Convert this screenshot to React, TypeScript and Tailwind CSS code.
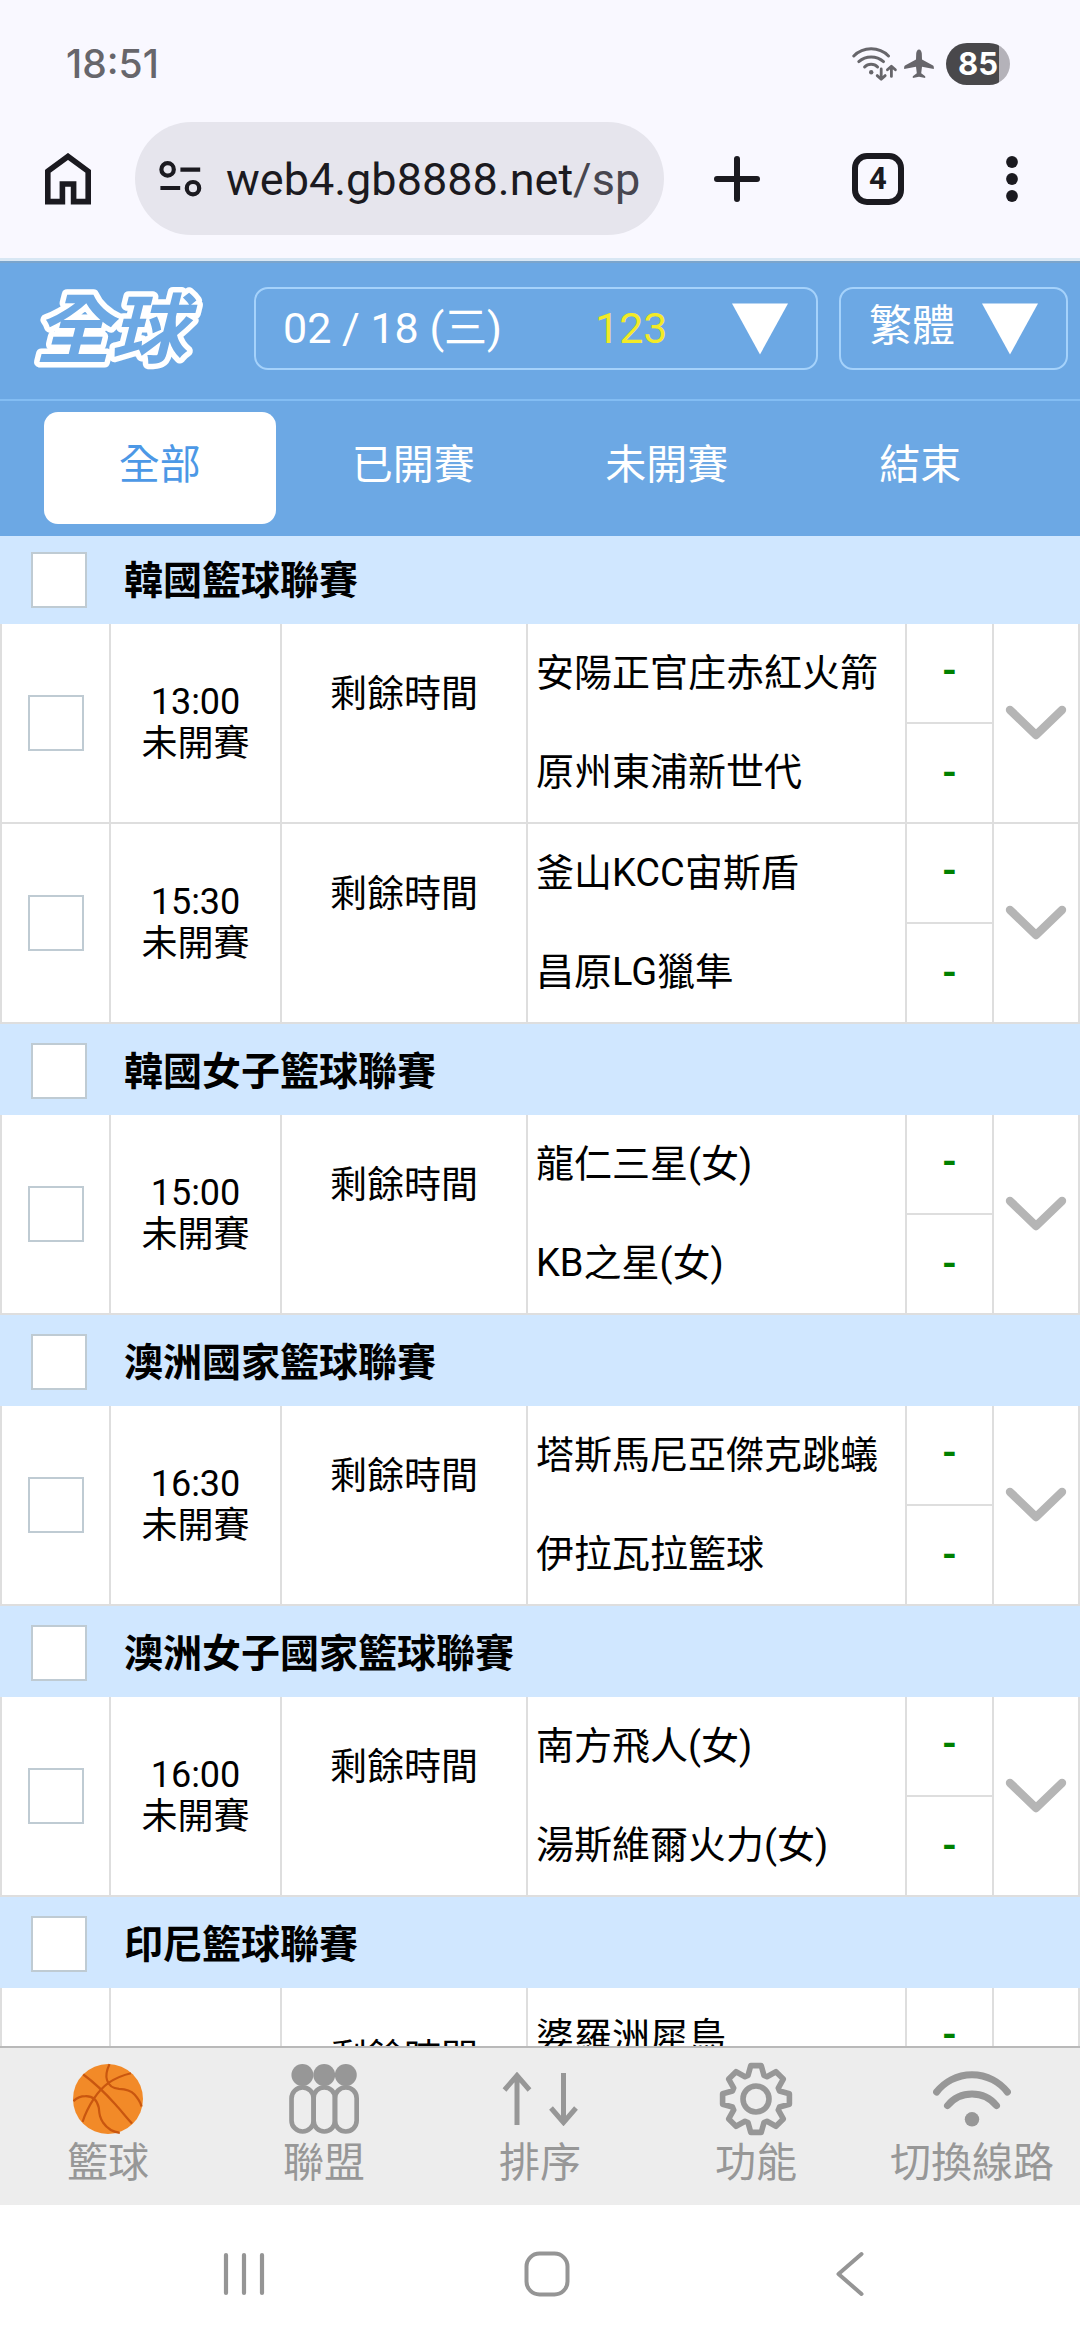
import React from "react";

type Match = {
  time: string;
  status: string;
  home: string;
  away: string;
};

type League = {
  name: string;
  matches: Match[];
};

const leagues: League[] = [
  {
    name: "韓國籃球聯賽",
    matches: [
      { time: "13:00", status: "未開賽", home: "安陽正官庄赤紅火箭", away: "原州東浦新世代" },
      { time: "15:30", status: "未開賽", home: "釜山KCC宙斯盾", away: "昌原LG獵隼" },
    ],
  },
  {
    name: "韓國女子籃球聯賽",
    matches: [{ time: "15:00", status: "未開賽", home: "龍仁三星(女)", away: "KB之星(女)" }],
  },
  {
    name: "澳洲國家籃球聯賽",
    matches: [{ time: "16:30", status: "未開賽", home: "塔斯馬尼亞傑克跳蟻", away: "伊拉瓦拉籃球" }],
  },
  {
    name: "澳洲女子國家籃球聯賽",
    matches: [{ time: "16:00", status: "未開賽", home: "南方飛人(女)", away: "湯斯維爾火力(女)" }],
  },
  {
    name: "印尼籃球聯賽",
    matches: [{ time: "", status: "", home: "婆羅洲犀鳥", away: "" }],
  },
];

function StatusBar() {
  return (
    <div className="flex h-[122px] items-start justify-between bg-[#f9f8ff] pt-[43px] pr-[70px] pl-[66px] font-['Inter',sans-serif]">
      <span className="text-[39px] leading-[42px] font-medium text-[#67666b]">18:51</span>
      <div className="flex h-[42px] items-center">
        <svg width="46" height="36" viewBox="0 0 46 36" fill="none" stroke="#67666b" strokeWidth="3" strokeLinecap="round" strokeLinejoin="round" aria-hidden="true">
          <path d="M1.8 10A24.6 24.6 0 0 1 36.5 10" />
          <path d="M6.8 15.6A18.6 18.6 0 0 1 31.5 15.6" />
          <path d="M12.6 21A9 9 0 0 1 25.6 21" />
          <circle cx="19.2" cy="26.3" r="2.2" fill="#67666b" stroke="none" />
          <path d="M29.2 23V33M25.2 29.6L29.2 33.2L33.2 29.6" strokeWidth="2.8" />
          <path d="M39.4 30.4V20.4M35.4 23.8L39.4 20.2L43.4 23.8" strokeWidth="2.8" />
        </svg>
        <svg className="ml-1.5" width="30" height="30" viewBox="0 0 30 30" fill="#67666b" aria-hidden="true">
          <path d="M15 0.5C16.6 0.5 17.6 2.400 17.800 4.400L18 10.600L29 16.400C29.800 17 30 18.600 29.800 20L18 17.800L17.200 24.200L21.200 27.200V29L15 27.800L8.800 29V27.200L12.800 24.200L12 17.800L0.200 20C0 18.600 0.200 17 1 16.400L12 10.600L12.200 4.400C12.400 2.400 13.400 0.500 15 0.500Z" />
        </svg>
        <div className="ml-3 flex h-[42px] w-16 items-center overflow-hidden rounded-full bg-[linear-gradient(to_right,#49484b_53px,#b4b2b9_53px)] pl-3">
          <span className="text-[31px] leading-[42px] font-bold text-white">85</span>
        </div>
      </div>
    </div>
  );
}

function BrowserBar() {
  return (
    <div className="flex h-[139px] items-start border-b-[3px] border-[#d8e7f4] bg-[#f9f8ff] pr-[62px] pl-[45px]">
      <button type="button" aria-label="Home" className="flex h-[114px] items-center">
        <svg width="46" height="52" viewBox="0 0 46 52" fill="none" stroke="#1b1a20" strokeWidth="5.6" aria-hidden="true">
          <path d="M2.8 18.3L23 3.4L43.2 18.3V48.6H28.6V31H17.4V48.6H2.8Z" />
        </svg>
      </button>
      <button type="button" className="ml-11 flex h-[113px] flex-1 items-center overflow-hidden rounded-full bg-[#e6e5ed] pl-6">
        <svg width="43" height="36" viewBox="0 0 43 36" fill="none" stroke="#1b1a20" strokeWidth="4.2" aria-hidden="true">
          <circle cx="8.6" cy="8.4" r="6.2" />
          <path d="M21.4 8.6H41.2M1.4 27H21.2" />
          <circle cx="34" cy="27.2" r="6.2" />
        </svg>
        <span className="ml-6 pt-0.5 text-[45px] leading-[56px] whitespace-nowrap text-[#1b1a20]">
          web4.gb8888.net<span className="text-[#47464f]">/sp</span>
        </span>
      </button>
      <button type="button" aria-label="New tab" className="ml-[50px] flex h-[114px] items-center">
        <svg width="46" height="46" viewBox="0 0 46 46" fill="none" stroke="#1b1a20" strokeWidth="6" strokeLinecap="round" aria-hidden="true">
          <path d="M23 3V43M3 23H43" />
        </svg>
      </button>
      <button type="button" className="mt-[31px] ml-[92px] flex size-[52px] items-center justify-center rounded-[15px] border-[6px] border-[#1b1a20]">
        <span className="text-[31px] leading-10 font-bold text-[#1b1a20]">4</span>
      </button>
      <button type="button" aria-label="Menu" className="ml-[102px] flex h-[114px] items-center">
        <svg width="12" height="46" viewBox="0 0 12 46" fill="#1b1a20" aria-hidden="true">
          <circle cx="6" cy="6" r="5.9" />
          <circle cx="6" cy="23" r="5.9" />
          <circle cx="6" cy="40" r="5.9" />
        </svg>
      </button>
    </div>
  );
}

function Triangle() {
  return (
    <svg className="pointer-events-none shrink-0" width="56" height="52" viewBox="0 0 56 52" fill="#fff" aria-hidden="true">
      <path d="M0 0.5H56L28 51.5Z" />
    </svg>
  );
}

function SiteHeader() {
  const tabs = ["全部", "已開賽", "未開賽", "結束"];
  return (
    <header className="border-t-2 border-[#7ba5cc] bg-[#6ca8e4]">
      <div className="flex items-start border-b-2 border-[#83bdf3] pt-6 pr-3 pb-7 pl-8">
        <svg className="shrink-0 overflow-visible" width="180" height="84" viewBox="0 0 180 84" role="img" aria-label="全球">
          <text
            x="3"
            y="70"
            fontSize="76"
            fontWeight="700"
            fontStyle="italic"
            fill="#6ca8e4"
            stroke="#fff"
            strokeWidth="11"
            strokeLinejoin="round"
            paintOrder="stroke"
          >
            全球
          </text>
        </svg>
        <div className="ml-[42px] flex h-[83px] flex-1 items-center rounded-[14px] border-2 border-[#a5d2fb] pr-7 pl-[27px] text-[43px] text-white">
          <select aria-label="日期" className="h-[79px] w-[312px] appearance-none bg-transparent outline-none">
            <option>02 / 18 (三)</option>
          </select>
          <span className="text-[#f3ea27]">123</span>
          <span className="ml-auto">
            <Triangle />
          </span>
        </div>
        <div className="ml-[21px] flex h-[83px] items-center rounded-[14px] border-2 border-[#a5d2fb] pr-7 pl-7 text-[43px] text-white">
          <select aria-label="語言" className="h-[79px] w-[113px] appearance-none bg-transparent pb-1 outline-none">
            <option>繁體</option>
          </select>
          <Triangle />
        </div>
      </div>
      <nav className="grid grid-cols-4 px-[33px] pt-[11px] pb-3">
        {tabs.map((tab, i) => (
          <button
            key={tab}
            type="button"
            className={
              i === 0
                ? "mx-[11px] h-28 rounded-[14px] bg-white pb-1 text-[41px] text-[#4c98e6]"
                : "mx-[11px] h-28 rounded-[14px] pb-1 text-[41px] text-white"
            }
          >
            {tab}
          </button>
        ))}
      </nav>
    </header>
  );
}

function Check({ label }: { label: string }) {
  return (
    <input
      type="checkbox"
      aria-label={label}
      className="block size-14 shrink-0 appearance-none border-2 border-[#bfcbd3] bg-white"
    />
  );
}

function MatchRow({ match }: { match: Match }) {
  return (
    <tr className="[&>td]:h-[200px] [&>td]:border-r-2 [&>td]:border-b-2 [&>td]:border-[#dedede] [&>td]:p-0">
      <td className="border-l-2">
        <div className="flex justify-center">
          <Check label={match.home} />
        </div>
      </td>
      <td className="text-center text-[36px] leading-[42px]">
        <div>{match.time}</div>
        <div>{match.status}</div>
      </td>
      <td className="text-center align-top text-[37px] leading-[42px]">
        <div className="mt-[50px]">剩餘時間</div>
      </td>
      <td className="text-[38px] whitespace-nowrap">
        <div className="flex h-[99px] items-center pl-2">{match.home}</div>
        <div className="flex h-[99px] items-center pl-2">{match.away}</div>
      </td>
      <td className="text-[38px] font-bold text-[#008000]">
        <div className="flex h-[100px] items-center justify-center border-b-2 border-[#dedede] pb-1">-</div>
        <div className="flex h-[98px] items-center justify-center">{match.away && "-"}</div>
      </td>
      <td>
        <button type="button" aria-label="展開" className="flex h-[198px] w-full items-center justify-center">
          <svg width="62" height="36" viewBox="0 0 62 36" fill="none" stroke="#b5b5b5" strokeWidth="8.4" strokeLinecap="round" strokeLinejoin="round" aria-hidden="true">
            <path d="M5 5L31 30L57 5" />
          </svg>
        </button>
      </td>
    </tr>
  );
}

function LeagueSection({ league, first }: { league: League; first: boolean }) {
  return (
    <section>
      <label className={first ? "flex h-[88px] items-center bg-[#d0e7ff] pl-[31px]" : "flex h-[91px] items-center bg-[#d0e7ff] pt-[3px] pl-[31px]"}>
        <Check label={league.name} />
        <span className="ml-[37px] pt-0.5 text-[39px] leading-[52px] font-bold">{league.name}</span>
      </label>
      <table className="w-full table-fixed border-separate border-spacing-0">
        <colgroup>
          <col className="w-[111px]" />
          <col className="w-[171px]" />
          <col className="w-[246px]" />
          <col />
          <col className="w-[87px]" />
          <col className="w-[86px]" />
        </colgroup>
        <tbody>
          {league.matches.map((m) => (
            <MatchRow key={m.home} match={m} />
          ))}
        </tbody>
      </table>
    </section>
  );
}

function BasketballIcon() {
  return (
    <svg width="70" height="72" viewBox="0 0 70 71" fill="none" stroke="#c9560f" strokeWidth="2.2" aria-hidden="true">
      <circle cx="35" cy="35.5" r="35" fill="#f28a28" stroke="none" />
      <path d="M10.3 11C22 19.5 29 26 42.5 41C48 47 53 53.5 59 60" />
      <path d="M58 9.7C50 11.5 42 15 35.5 19.3C29 24 24.5 29.5 20.7 35.3C16 42.5 12.5 49 9.6 58.3" />
      <path d="M36.5 0.6C34 6 32.5 12 34 16.5C35.5 21.5 40 25 46 25.3C54 25.5 58 27 61.5 31C65.5 35.5 67.5 38.5 68.5 43" />
      <path d="M0.4 37.7C4 34 8 32.7 12.5 32.7C20 32.5 24 36 25.8 44.3C26.5 52 27 54 30 59C34.5 65.5 40 68.5 46.8 69.3" />
    </svg>
  );
}

function PeopleIcon() {
  return (
    <svg width="70" height="70" viewBox="0 0 69 69" fill="none" stroke="#979797" strokeWidth="4.6" aria-hidden="true">
      <g fill="#979797" stroke="none">
        <circle cx="13.2" cy="10.8" r="10.8" />
        <circle cx="34.7" cy="10.8" r="10.8" />
        <circle cx="56" cy="10.8" r="10.8" />
      </g>
      <rect x="2.5" y="23" width="21.8" height="43.5" rx="10.9" />
      <rect x="24.3" y="23" width="21" height="43.5" rx="10.5" />
      <rect x="45.3" y="23" width="21.4" height="43.5" rx="10.7" />
    </svg>
  );
}

function SortIcon() {
  return (
    <svg width="76" height="54" viewBox="0 0 76 54" fill="none" stroke="#979797" strokeWidth="5" aria-hidden="true">
      <path d="M15 53V4M2.5 18L15 3.5L27.5 18" />
      <path d="M61.5 1V50M49 36L61.5 50.5L74 36" />
    </svg>
  );
}

/* Outline of one tooth, repeated every 45 degrees around the hub. */
const tooth: [number, number][] = [
  [-8, -23.5],
  [-5.2, -33.4],
  [5.2, -33.4],
  [8, -23.5],
];

const gearPath =
  Array.from({ length: 8 }, (_, k) => {
    const a = (k * Math.PI) / 4;
    return tooth
      .map(([x, y]) => {
        const px = x * Math.cos(a) - y * Math.sin(a);
        const py = x * Math.sin(a) + y * Math.cos(a);
        return `${px.toFixed(2)} ${py.toFixed(2)}`;
      })
      .join("L");
  }).reduce((d, part, i) => d + (i === 0 ? "M" : "L") + part, "") + "Z";

function GearIcon() {
  return (
    <svg width="74" height="74" viewBox="-37 -37 74 74" fill="none" stroke="#979797" strokeWidth="5.6" strokeLinejoin="round" aria-hidden="true">
      <path d={gearPath} />
      <circle r="13" />
    </svg>
  );
}

function WifiIcon() {
  return (
    <svg width="78" height="56" viewBox="0 0 78 56" fill="none" stroke="#979797" strokeWidth="7" strokeLinecap="round" aria-hidden="true">
      <path d="M3.6 21A44.8 44.8 0 0 1 74.4 21" />
      <path d="M14.5 34.6A31.7 31.7 0 0 1 63.5 34.6" />
      <circle cx="39" cy="48.3" r="7.2" fill="#979797" stroke="none" />
    </svg>
  );
}

const bottomItems = [
  { label: "籃球", icon: <BasketballIcon /> },
  { label: "聯盟", icon: <PeopleIcon /> },
  { label: "排序", icon: <SortIcon /> },
  { label: "功能", icon: <GearIcon /> },
  { label: "切換線路", icon: <WifiIcon /> },
];

function BottomNav() {
  return (
    <nav className="grid h-[159px] shrink-0 grid-cols-5 border-t-2 border-[#b9b9b9] bg-[#ededed]">
      {bottomItems.map((item) => (
        <button key={item.label} type="button" className="flex flex-col items-center pt-[13px]">
          <span className="flex h-[76px] items-center">{item.icon}</span>
          <span className="text-[41px] leading-[52px] whitespace-nowrap text-[#979797]">{item.label}</span>
        </button>
      ))}
    </nav>
  );
}

function SystemNav() {
  return (
    <nav className="grid h-[135px] shrink-0 grid-cols-3 bg-white pt-0.5 pr-[78px] pl-[92px]">
      <button type="button" aria-label="Recent apps" className="flex items-center justify-center">
        <svg width="42" height="44" viewBox="0 0 42 44" stroke="#959595" strokeWidth="4.2" strokeLinecap="round" aria-hidden="true">
          <path d="M3 3V41M21 3V41M39 3V41" />
        </svg>
      </button>
      <button type="button" aria-label="Home screen" className="flex items-center justify-center">
        <svg width="46" height="46" viewBox="0 0 46 46" fill="none" stroke="#959595" strokeWidth="4" aria-hidden="true">
          <rect x="2.5" y="2.5" width="41" height="41" rx="13" />
        </svg>
      </button>
      <button type="button" aria-label="Back" className="flex items-center justify-center">
        <svg width="30" height="46" viewBox="0 0 30 46" fill="none" stroke="#959595" strokeWidth="4" strokeLinecap="round" strokeLinejoin="round" aria-hidden="true">
          <path d="M26.5 3L3.5 23L26.5 43" />
        </svg>
      </button>
    </nav>
  );
}

export default function App() {
  return (
    <div className="flex h-screen flex-col bg-white font-['Roboto','Noto_Sans_CJK_TC',sans-serif] text-black">
      <StatusBar />
      <BrowserBar />
      <SiteHeader />
      <main className="min-h-0 flex-1 overflow-hidden">
        {leagues.map((league, i) => (
          <LeagueSection key={league.name} league={league} first={i === 0} />
        ))}
      </main>
      <BottomNav />
      <SystemNav />
    </div>
  );
}
